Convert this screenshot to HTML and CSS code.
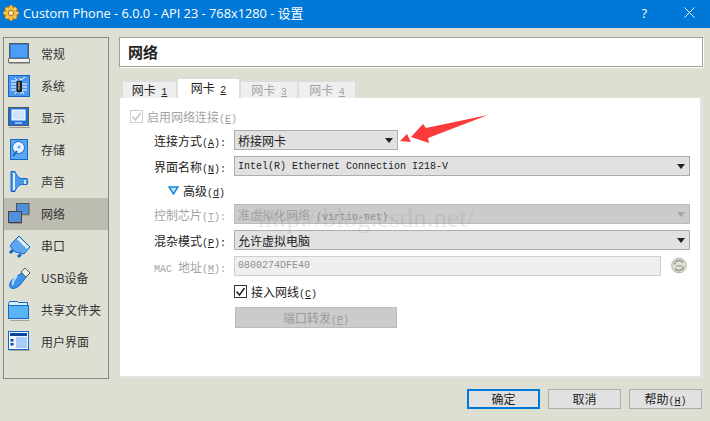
FILE: index.html
```html
<!DOCTYPE html>
<html lang="zh">
<head>
  <meta charset="UTF-8">
  <title>Custom Phone - 设置</title>
  <link rel="stylesheet" href="styles.css">
</head>
<body>
  <!-- Title bar -->
  <div class="titlebar">
    <svg class="app-icon" width="16" height="16" viewBox="0 0 16 16">
      <circle cx="8" cy="8" r="7.6" fill="#b8791c"/>
      <circle cx="8" cy="8" r="6" fill="#f0b93a"/>
      <path d="M8 .5v3M8 12.500v3M.5 8h3M12.500 8h3M2.700 2.700l2.200 2.200M11.100 11.100l2.200 2.200M13.300 2.700l-2.200 2.200M4.900 11.100l-2.200 2.200" stroke="#f7d26a" stroke-width="2"/>
      <circle cx="8" cy="8" r="2.600" fill="#fff3c8" stroke="#a86d14"/>
    </svg>
    <span class="title-text">Custom Phone - 6.0.0 - API 23 - 768x1280 - 设置</span>
    <span class="title-help">?</span>
    <svg class="title-close" width="11" height="11" viewBox="0 0 11 11">
      <path d="M.5 .5l10 10M10.500 .5l-10 10" stroke="#fff" stroke-width="1"/>
    </svg>
  </div>

  <div class="content">
    <!-- Sidebar -->
    <div class="sidebar">
      <div class="nav-item">
        <svg class="nav-icon" width="22" height="22" viewBox="0 0 22 22">
          <rect x="1.500" y=".5" width="19" height="15" fill="#2f7fe8" stroke="#55585c"/>
          <rect x="3" y="2" width="16" height="12" fill="#4d9df5"/>
          <path d="M.5 15.500h21v4H.5z" fill="#f2f2ea" stroke="#6e7070"/>
          <path d="M1 20.500h21" stroke="#a5a59a"/>
        </svg>
        <span>常规</span>
      </div>
      <div class="nav-item">
        <svg class="nav-icon" width="22" height="22" viewBox="0 0 22 22">
          <rect x=".5" y=".5" width="21" height="21" fill="#4d97ea" stroke="#1565c8"/>
          <path d="M3 6h6M3 9h5M3 12h5M3 15h5M14 9h5M14 12h5M14 15h5M7 19l2-3M13 19v-3M16 19l-2-3M13 5l4-3M9 5L7 3M12 3v2" stroke="#fff" stroke-width="1"/>
          <rect x="8.500" y="6" width="5.500" height="11" fill="#222"/>
          <rect x="10" y="7" width="2" height="8" fill="#7a7a7a"/>
        </svg>
        <span>系统</span>
      </div>
      <div class="nav-item">
        <svg class="nav-icon" width="22" height="22" viewBox="0 0 22 22">
          <rect x=".5" y=".5" width="20" height="18" fill="#1e73d8" stroke="#555"/>
          <rect x="4" y="3" width="13" height="10" fill="#cfe5ff" stroke="#fff"/>
          <path d="M7 16h7" stroke="#fff"/>
          <path d="M1 20.500h21" stroke="#999"/>
        </svg>
        <span>显示</span>
      </div>
      <div class="nav-item">
        <svg class="nav-icon" width="22" height="22" viewBox="0 0 22 22">
          <rect x="2.500" y=".5" width="17" height="20" fill="#5aa6f0" stroke="#1668c8"/>
          <circle cx="10.500" cy="8.500" r="6" fill="#e9f3fd" stroke="#1668c8"/>
          <circle cx="11" cy="8" r="1.500" fill="#5aa6f0"/>
          <path d="M9 12l-4 5" stroke="#1668c8" stroke-width="2"/>
        </svg>
        <span>存储</span>
      </div>
      <div class="nav-item">
        <svg class="nav-icon" width="22" height="22" viewBox="0 0 22 22">
          <path d="M3 .5h4c1 3 3 6 6 7h6c1 2 1 5 0 6h-6c-3 1-5 4-6 7H3z" fill="#4a98ea" stroke="#1668c8"/>
          <path d="M6 2v17" stroke="#d8ebff" stroke-width="2"/>
          <path d="M17 9v4" stroke="#cfe5ff" stroke-width="2"/>
        </svg>
        <span>声音</span>
      </div>
      <div class="nav-item selected">
        <svg class="nav-icon" width="22" height="22" viewBox="0 0 22 22">
          <rect x="8.500" y=".5" width="12.500" height="11" fill="#4f8fdc" stroke="#555"/>
          <rect x=".5" y="8.500" width="13" height="11" fill="#4f8fdc" stroke="#444"/>
          <path d="M1 20.500h13M14 12h8" stroke="#8f8f85"/>
        </svg>
        <span>网络</span>
      </div>
      <div class="nav-item">
        <svg class="nav-icon" width="24" height="24" viewBox="0 0 24 24">
          <path d="M11 1l11 11-6 7-3-1-6-1-5-6 3-4z" fill="#5aa6f0" stroke="#1668c8"/>
          <path d="M10 3l10 10" stroke="#eee" stroke-width="3"/>
          <path d="M5 15l-3 3M13 19l-3 3" stroke="#1668c8" stroke-width="3"/>
        </svg>
        <span>串口</span>
      </div>
      <div class="nav-item">
        <svg class="nav-icon" width="23" height="23" viewBox="0 0 23 23">
          <path d="M15 5l4 4-7 9c-3 3-7 4-9 3s-2-5 1-8z" fill="#3f94ea" stroke="#1668c8"/>
          <path d="M5 18c-1-3 1-6 4-9" stroke="#bfe0ff" stroke-width="2" fill="none"/>
          <path d="M17 1l5 5-4 4-5-5z" fill="#f4f4ee" stroke="#555"/>
        </svg>
        <span>USB设备</span>
      </div>
      <div class="nav-item">
        <svg class="nav-icon" width="22" height="22" viewBox="0 0 22 22">
          <path d="M.5 4.500l1-2h8l1 1h9v16H.5z" fill="#d8eefc" stroke="#1668c8"/>
          <rect x=".5" y="6.500" width="20" height="13" fill="#58b4f4" stroke="#1668c8"/>
          <path d="M2 21.500h20" stroke="#a5a59a"/>
        </svg>
        <span>共享文件夹</span>
      </div>
      <div class="nav-item">
        <svg class="nav-icon" width="22" height="22" viewBox="0 0 22 22">
          <rect x=".5" y=".5" width="20" height="18" fill="#eef5ff" stroke="#1668c8"/>
          <rect x="2" y="2" width="17" height="3" fill="#10479e"/>
          <rect x="8" y="6" width="11" height="11" fill="#a9cdfb"/>
          <rect x="2.500" y="8" width="3" height="2.500" fill="#10479e"/>
          <rect x="2.500" y="12" width="3" height="2.500" fill="#10479e"/>
          <path d="M1 19.500h21" stroke="#a5a59a"/>
        </svg>
        <span>用户界面</span>
      </div>
    </div>

    <div class="main">
      <div class="page-title">网络</div>

      <!-- Adapter tabs -->
      <div class="tabs">
        <div class="tab first">网卡 <u class="m">1</u></div>
        <div class="tab active">网卡 <u class="m">2</u></div>
        <div class="tab off">网卡 <u class="m">3</u></div>
        <div class="tab off">网卡 <u class="m">4</u></div>
      </div>

      <div class="pane">
        <label class="enable off">
          <span class="check"><svg width="13" height="13" viewBox="0 0 13 13"><path d="M2.500 6.500l3 3.500 5-7" stroke="#c4c4c4" stroke-width="1.500" fill="none"/></svg></span>
          <span>启用网络连接<span class="m">(<u>E</u>)</span></span>
        </label>

        <div class="form">
          <div class="label">连接方式<span class="m">(<u>A</u>):</span></div>
          <div class="combo short"><span>桥接网卡</span><i class="caret"></i></div>

          <div class="label">界面名称<span class="m">(<u>N</u>):</span></div>
          <div class="combo"><span class="m">Intel(R) Ethernet Connection I218-V</span><i class="caret"></i></div>

          <div class="advanced">
            <svg width="11" height="9" viewBox="0 0 11 9"><path d="M1 1h9L5.500 8z" fill="#bfe4fb" stroke="#1a86d8" stroke-width="1.500"/></svg>
            <span>高级<span class="m">(<u>d</u>)</span></span>
          </div>

          <div class="label off">控制芯片<span class="m">(<u>T</u>):</span></div>
          <div class="combo disabled"><span>准虚拟化网络<span class="m virtio">(virtio-net)</span></span><i class="caret"></i></div>

          <div class="label">混杂模式<span class="m">(<u>P</u>):</span></div>
          <div class="combo"><span>允许虚拟电脑</span><i class="caret"></i></div>

          <div class="label off"><span class="m">MAC </span>地址<span class="m">(<u>M</u>):</span></div>
          <div class="mac-row">
            <div class="mac-input m">0800274DFE40</div>
            <svg class="refresh" width="16" height="17" viewBox="0 0 16 17">
              <circle cx="8" cy="8.500" r="7.300" fill="#dfe1d4" stroke="#b0b3a6"/>
              <path d="M3.500 7.500a4.700 4.700 0 0 1 8.500-2M12.500 9.500a4.700 4.700 0 0 1-8.500 2" stroke="#8f9a86" stroke-width="1.500" fill="none"/>
              <path d="M5 9h6" stroke="#8f9a86"/>
            </svg>
          </div>

          <div class="cable">
            <span class="check on"><svg width="13" height="13" viewBox="0 0 13 13"><path d="M2.500 6.500l3 3.500 5-7" stroke="#222" stroke-width="1.500" fill="none"/></svg></span>
            <span>接入网线<span class="m">(<u>C</u>)</span></span>
          </div>

          <div class="port-btn">端口转发<span class="m">(<u>P</u>)</span></div>
        </div>
      </div>
    </div>
  </div>

  <!-- Dialog buttons -->
  <div class="buttons">
    <div class="btn default">确定</div>
    <div class="btn">取消</div>
    <div class="btn">帮助<span class="m">(<u>H</u>)</span></div>
  </div>

  <!-- Annotation arrow and watermark drawn over the screenshot -->
  <svg class="arrow" width="100" height="40" viewBox="0 0 100 40">
    <path d="M1 36l7-7 4 8z" fill="#fb3a3a"/>
    <path d="M12 32l12-13 3 4 62-13-60 23 1 5z" fill="#fb3a3a"/>
  </svg>
  <div class="watermark">http://blog.csdn.net/</div>
</body>
</html>
```

FILE: styles.css
```css
* {
  margin: 0;
  padding: 0;
  box-sizing: border-box;
}

html, body {
  width: 710px;
  height: 421px;
  overflow: hidden;
}

body {
  position: relative;
  font-family: "Noto Sans CJK SC", sans-serif;
  font-size: 12px;
  color: #222;
  background-color: #dedfd3;
}

/* Latin text in the dialog looks like a fixed pitch bitmap font */
.m {
  font-family: "Liberation Mono", monospace;
  font-size: 10px;
}

.off,
.off .m {
  color: #a3a3a3;
}

/* Title bar */
.titlebar {
  height: 28px;
  display: flex;
  align-items: center;
  padding: 0 15px 3px 3px;
  background-color: #0078d7;
  color: #fff;
}

.app-icon {
  margin-right: 4px;
}

.title-text {
  flex: 1;
  font-family: "Open Sans", "Noto Sans CJK SC", sans-serif;
  font-size: 12.8px;
}

.title-help {
  margin-right: 37px;
  font-family: "Open Sans", sans-serif;
  font-size: 13px;
}

/* Layout */
.content {
  display: flex;
  height: 351px;
  padding: 9px 7px 0 3px;
}

.sidebar {
  width: 106px;
  height: 342px;
  border: 1px solid #888b8d;
  flex-shrink: 0;
}

.nav-item {
  height: 32px;
  display: flex;
  align-items: center;
  position: relative;
  padding: 0 0 2px 37px;
  color: #333;
}

.nav-item.selected {
  background-color: #bdbcb0;
}

.nav-icon {
  position: absolute;
  left: 4px;
  top: 5px;
}

.main {
  flex: 1;
  margin-left: 10px;
  min-width: 0;
}

.page-title {
  height: 30px;
  line-height: 27px;
  padding-left: 8px;
  font-size: 15px;
  font-weight: bold;
  color: #222;
  background-color: #fff;
  border: 1px solid #a0a094;
  box-shadow: 1px 1px 0 #fff;
}

/* Tabs */
.tabs {
  display: flex;
  align-items: flex-end;
  height: 31px;
  padding-left: 3px;
}

.tab {
  height: 17px;
  width: 58px;
  line-height: 16px;
  text-align: center;
  font-size: 12px;
  background-color: #efefef;
  border: 1px solid #dcdcdc;
  border-bottom: none;
}

.tab .m {
  margin-left: 3px;
}

.tab.first {
  width: 55px;
}

.tab.active {
  width: 63px;
  height: 20px;
  background-color: #fff;
  line-height: 18px;
}

.tab.off {
  color: #a3a3a3;
}

.pane {
  height: 280px;
  margin-left: 1px;
  padding: 10px 13px 0 10px;
  background-color: #fff;
  border-right: 3px solid #e2e2e2;
  border-bottom: 2px solid #e2e2e2;
}

.enable {
  display: flex;
  align-items: center;
  gap: 4px;
  height: 16px;
}

.check {
  width: 13px;
  height: 13px;
  display: block;
  border: 1px solid #cfcfcf;
  line-height: 0;
}

.check svg {
  margin: -1px;
}

.check.on {
  border-color: #333;
}

/* Form grid */
.form {
  display: grid;
  grid-template-columns: 98px 456px;
  column-gap: 6px;
  row-gap: 6px;
  margin-top: 6px;
  align-items: center;
}

.label {
  text-align: right;
  white-space: nowrap;
  padding-right: 2px;
}

.combo {
  height: 20px;
  display: flex;
  align-items: center;
  justify-content: space-between;
  padding: 0 4px 0 3px;
  background-color: #e1e1e1;
  border: 1px solid #adadad;
}

.combo.short {
  width: 164px;
}

.combo.disabled {
  color: #a3a3a3;
  background-color: #cbcbcb;
  border-color: #bbb;
}

.combo.disabled .m {
  color: #8f8f8f;
}

.virtio {
  margin-left: 6px;
}

.caret {
  width: 0;
  height: 0;
  border-left: 4px solid transparent;
  border-right: 4px solid transparent;
  border-top: 5px solid #222;
}

.combo.disabled .caret {
  border-top-color: #a3a3a3;
}

.advanced {
  grid-column: 1 / 3;
  height: 16px;
  padding-left: 38px;
  display: flex;
  align-items: center;
  gap: 4px;
}

.mac-row {
  position: relative;
  height: 20px;
}

.mac-input {
  width: 427px;
  height: 20px;
  line-height: 18px;
  padding-left: 3px;
  color: #8f8f8f;
  background-color: #efefef;
  border: 1px solid #cfcfcf;
}

.refresh {
  position: absolute;
  right: 3px;
  top: 1px;
}

.cable {
  grid-column: 2;
  height: 16px;
  margin-top: 1px;
  display: flex;
  align-items: center;
  gap: 4px;
}

.port-btn {
  grid-column: 2;
  width: 162px;
  height: 21px;
  margin-left: 1px;
  margin-top: 2px;
  line-height: 19px;
  text-align: center;
  color: #9a9a9a;
  background-color: #cbcbcb;
  border: 1px solid #bbb;
}

.port-btn .m {
  color: #9a9a9a;
}

/* Bottom buttons */
.buttons {
  display: flex;
  justify-content: flex-end;
  gap: 8px;
  padding: 10px 8px 0 0;
}

.btn {
  width: 73px;
  height: 20px;
  line-height: 18px;
  text-align: center;
  background-color: #e1e1e1;
  border: 1px solid #adadad;
}

.btn.default {
  border: 2px solid #0078d7;
  line-height: 16px;
}

/* Overlays */
.arrow {
  position: absolute;
  left: 399px;
  top: 105px;
}

.watermark {
  position: absolute;
  left: 258px;
  top: 203px;
  font-family: "Liberation Serif", serif;
  font-size: 27px;
  white-space: nowrap;
  color: rgba(120, 120, 120, 0.16);
}
```
